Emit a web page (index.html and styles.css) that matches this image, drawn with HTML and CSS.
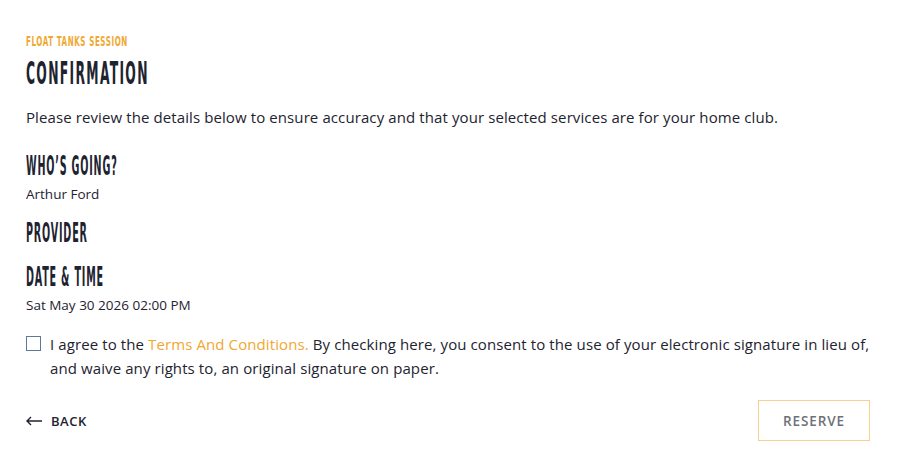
FILE: index.html
```html
<!DOCTYPE html>
<html lang="en">
<head>
    <meta charset="UTF-8">
    <meta name="viewport" content="width=device-width, initial-scale=1.0">
    <title>Confirmation</title>
    <link rel="stylesheet" href="styles.css">
</head>
<body>
    <div class="container">
        <div class="eyebrow"><span>Float Tanks Session</span></div>
        <h1><span>Confirmation</span></h1>
        <p class="intro">Please review the details below to ensure accuracy and that your selected services are for your home club.</p>

        <div class="details">
            <div class="detail">
                <h2><span>Who’s Going?</span></h2>
                <div class="value">Arthur Ford</div>
            </div>
            <div class="detail">
                <h2><span>Provider</span></h2>
            </div>
            <div class="detail">
                <h2><span>Date &amp; Time</span></h2>
                <div class="value">Sat May 30 2026 02:00 PM</div>
            </div>
        </div>

        <label class="agree">
            <input type="checkbox">
            <span class="box"></span>
            <span>I agree to the <a href="#">Terms And Conditions.</a> By checking here, you consent to the use of your electronic signature in lieu of, and waive any rights to, an original signature on paper.</span>
        </label>

        <div class="actions">
            <a href="#" class="back">
                <svg width="17" height="10" viewBox="0 0 17 10"><path d="M5 1 L1 5 L5 9 M1 5 H16" fill="none" stroke="#1e2330" stroke-width="1.4"/></svg>
                Back
            </a>
            <button class="reserve" disabled>Reserve</button>
        </div>
    </div>
</body>
</html>
```

FILE: styles.css
```css
body {
    margin: 0;
    font-family: "Open Sans", Arial, sans-serif;
    color: #1e2330;
    background: #fff;
}
.container {
    padding: 33px 28px 0 26px;
}
/* condensed display type: squeeze the bold face sideways */
.eyebrow span,
h1 span,
h2 span {
    display: inline-block;
    transform-origin: left center;
    white-space: nowrap;
}
.eyebrow {
    font-family: "DejaVu Sans Condensed", "DejaVu Sans", sans-serif;
    font-weight: 700;
    text-transform: uppercase;
    color: #f0a830;
    font-size: 13.7px;
    line-height: 16px;
    letter-spacing: 1px;
}
.eyebrow span {
    transform: scaleX(0.58);
}
h1, h2 {
    font-family: "DejaVu Sans Condensed", "DejaVu Sans", sans-serif;
    font-weight: 700;
    text-transform: uppercase;
    margin: 0;
}
h1 {
    font-size: 31.5px;
    line-height: 36px;
    letter-spacing: 3px;
    margin-top: 6px;
}
h1 span {
    transform: scaleX(0.436);
}
.intro {
    font-size: 15px;
    letter-spacing: 0.1px;
    line-height: 20px;
    margin: 16px 0 0;
}
.details {
    margin-top: 25px;
}
.detail + .detail {
    margin-top: 16px;
}
h2 {
    font-size: 26px;
    line-height: 28px;
    letter-spacing: 2px;
}
h2 span {
    transform: scaleX(0.41);
}
.value {
    font-size: 13.5px;
    line-height: 18px;
    margin-top: 5px;
}
.agree {
    display: flex;
    gap: 9px;
    margin-top: 18px;
    font-size: 15px;
    letter-spacing: 0.1px;
    line-height: 24px;
}
.agree input {
    display: none;
}
.box {
    flex: none;
    width: 13px;
    height: 13px;
    border: 1.5px solid #5b7a98;
    margin-top: 4px;
}
.agree a {
    color: #f0a830;
    text-decoration: none;
}
.actions {
    display: flex;
    justify-content: space-between;
    align-items: center;
    margin-top: 20px;
}
.back {
    display: flex;
    align-items: center;
    gap: 8px;
    color: #1e2330;
    text-decoration: none;
    text-transform: uppercase;
    font-size: 13px;
    font-weight: 600;
    letter-spacing: 0.5px;
}
.reserve {
    width: 112px;
    height: 41px;
    background: #fff;
    border: 1.5px solid #f5d091;
    color: #6e7079;
    font-family: "Open Sans", Arial, sans-serif;
    font-weight: 600;
    font-size: 13.5px;
    letter-spacing: 0.9px;
    text-transform: uppercase;
}
```
